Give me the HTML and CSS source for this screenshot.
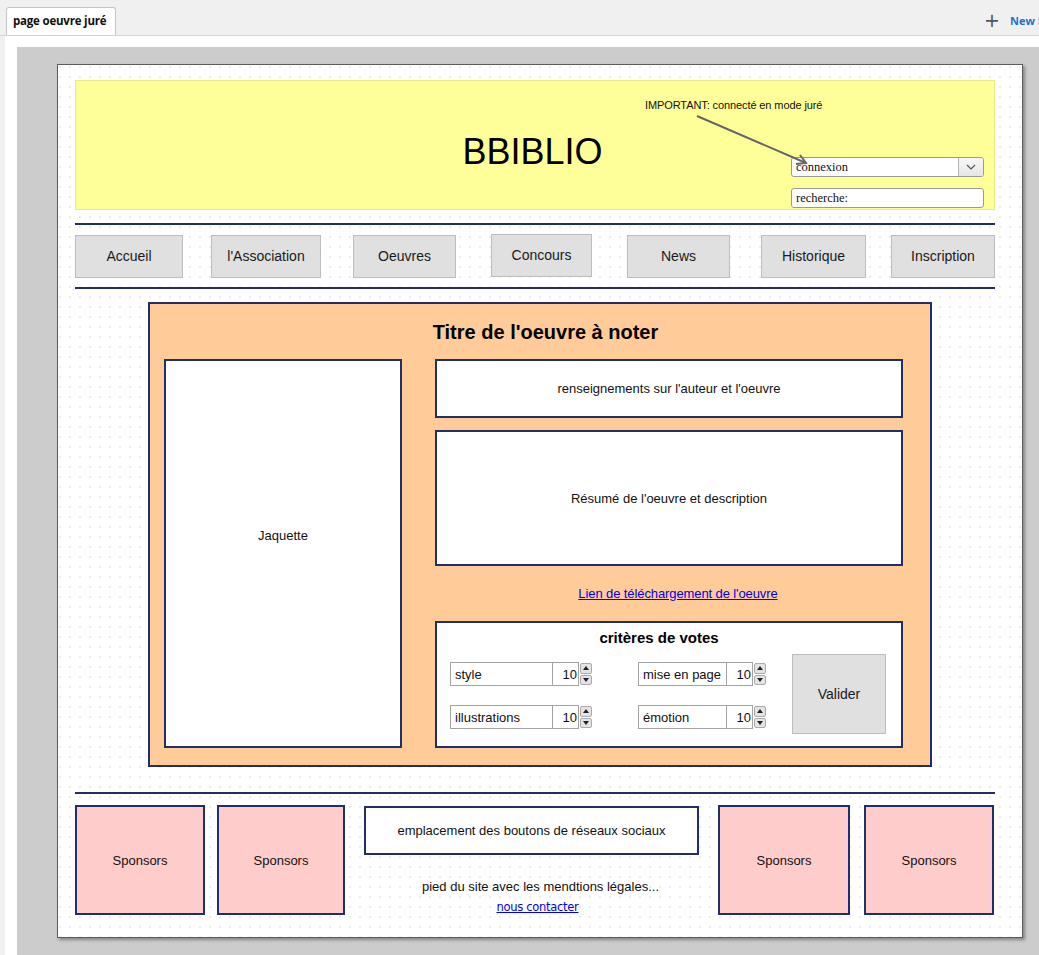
FILE: index.html
```html
<!DOCTYPE html>
<html lang="fr">
<head>
<meta charset="utf-8">
<title>page oeuvre juré</title>
<link rel="stylesheet" href="styles.css">
</head>
<body>
<div class="topbar">
  <div class="tab">page oeuvre juré</div>
  <div class="newpage"><span class="plus">+</span><span class="newtext">New Page</span></div>
</div>
<div class="workspace">
  <div class="canvas">
    <div class="page">
      <header class="header">
        <div class="brand">BBIBLIO</div>
        <div class="note">IMPORTANT: connecté en mode juré</div>
        <svg class="arrow" width="920" height="130" viewBox="0 0 920 130">
          <line x1="621" y1="35" x2="730" y2="82" stroke="#666" stroke-width="2"/>
          <polyline points="724,74 730,82 720,83" fill="none" stroke="#666" stroke-width="2"/>
        </svg>
        <div class="controls">
          <div class="select">
            <span class="select-text">connexion</span>
            <span class="select-btn"><svg width="10" height="6" viewBox="0 0 10 6"><path d="M1 1 L5 5 L9 1" fill="none" stroke="#555" stroke-width="1.2"/></svg></span>
          </div>
          <div class="search">recherche:</div>
        </div>
      </header>
      <div class="rule rule-top"></div>
      <nav class="nav">
        <div class="navbtn">Accueil</div>
        <div class="navbtn">l'Association</div>
        <div class="navbtn">Oeuvres</div>
        <div class="navbtn">Concours</div>
        <div class="navbtn">News</div>
        <div class="navbtn">Historique</div>
        <div class="navbtn">Inscription</div>
      </nav>
      <div class="rule rule-mid"></div>
      <section class="work">
        <h1 class="work-title">Titre de l'oeuvre à noter</h1>
        <div class="work-body">
          <div class="box jaquette">Jaquette</div>
          <div class="work-right">
            <div class="box info">renseignements sur l'auteur et l'oeuvre</div>
            <div class="box resume">Résumé de l'oeuvre et description</div>
            <div class="linkrow"><a href="#" class="dl-link">Lien de téléchargement de l'oeuvre</a></div>
            <div class="box criteria">
              <div class="crit-title">critères de votes</div>
              <div class="crit-body">
                <div class="crit-grid">
                  <div class="spin">
                    <div class="spin-label">style</div>
                    <div class="spin-num">10</div>
                    <div class="spin-arrows"><span class="up"></span><span class="down"></span></div>
                  </div>
                  <div class="spin spin-narrow">
                    <div class="spin-label">mise en page</div>
                    <div class="spin-num">10</div>
                    <div class="spin-arrows"><span class="up"></span><span class="down"></span></div>
                  </div>
                  <div class="spin">
                    <div class="spin-label">illustrations</div>
                    <div class="spin-num">10</div>
                    <div class="spin-arrows"><span class="up"></span><span class="down"></span></div>
                  </div>
                  <div class="spin spin-narrow">
                    <div class="spin-label">émotion</div>
                    <div class="spin-num">10</div>
                    <div class="spin-arrows"><span class="up"></span><span class="down"></span></div>
                  </div>
                </div>
                <div class="valider">Valider</div>
              </div>
            </div>
          </div>
        </div>
      </section>
      <div class="rule rule-bottom"></div>
      <footer class="footer">
        <div class="sponsor s1">Sponsors</div>
        <div class="sponsor s2">Sponsors</div>
        <div class="footer-mid">
          <div class="box social">emplacement des boutons de réseaux sociaux</div>
          <div class="legal">pied du site avec les mendtions légales...</div>
          <a href="#" class="contact">nous contacter</a>
        </div>
        <div class="sponsor s3">Sponsors</div>
        <div class="sponsor s4">Sponsors</div>
      </footer>
    </div>
  </div>
</div>
</body>
</html>
```
FILE: styles.css
```css
* { box-sizing: border-box; }
html, body { margin: 0; padding: 0; }
body {
  background: #f0f0f0;
  font-family: "Liberation Sans", Arial, sans-serif;
  font-size: 13px;
  color: #111;
  width: 1039px;
  height: 955px;
  overflow: hidden;
}

/* top bar */
.topbar {
  height: 36px;
  border-bottom: 1px solid #d6d6d6;
  display: flex;
  align-items: flex-end;
  padding-left: 6px;
  overflow: hidden;
}
.tab {
  height: 29px;
  width: 110px;
  background: #fff;
  border: 1px solid #c6c6c6;
  border-bottom: none;
  border-radius: 3px 3px 0 0;
  font-family: "Open Sans", sans-serif;
  font-weight: 700;
  font-size: 11.5px;
  padding: 5px 0 0 6px;
  margin-bottom: -1px;
  color: #111;
  letter-spacing: -0.2px;
}
.newpage {
  margin-left: auto;
  margin-right: -25px;
  align-self: center;
  display: flex;
  align-items: center;
  gap: 10px;
  margin-top: 6px;
  white-space: nowrap;
}
.plus {
  font-family: "DejaVu Sans", sans-serif;
  font-size: 19px;
  color: #555;
  line-height: 1;
}
.newtext {
  font-family: "Open Sans", sans-serif;
  font-weight: 700;
  font-size: 11px;
  color: #1874cd;
}

/* workspace */
.workspace {
  margin-left: 5px;
  background: #fff;
  padding: 11px 0 0 12px;
  height: 919px;
}
.canvas {
  background: #cccccc;
  height: 908px;
  padding: 17px 0 0 40px;
}
.page {
  width: 966px;
  height: 874px;
  background-color: #fff;
  background-image: radial-gradient(circle at 2px 2px, #ebecf1 1px, transparent 1.6px);
  background-size: 10px 10px;
  border: 1px solid #5c5c5c;
  box-shadow: 2px 2px 3px rgba(0,0,0,0.35);
  padding: 15px 27px 0 17px;
}

/* header */
.header {
  position: relative;
  height: 130px;
  background: #ffff99;
  border: 1px solid #e9e98a;
  display: grid;
}
.header > * { grid-area: 1 / 1; }
.brand {
  justify-self: center;
  align-self: center;
  margin-top: 14px;
  margin-right: 5px;
  font-size: 36px;
  color: #000;
}
.note {
  justify-self: start;
  align-self: start;
  margin: 18px 0 0 569px;
  font-size: 11px;
  color: #111;
  letter-spacing: -0.1px;
}
.arrow {
  position: absolute;
  left: 0;
  top: 0;
  pointer-events: none;
}
.controls {
  justify-self: end;
  align-self: end;
  margin: 0 10px 1px 0;
  display: flex;
  flex-direction: column;
  gap: 11px;
}
.select, .search {
  width: 193px;
  height: 20px;
  background: #fff;
  border: 1px solid #9a9a9a;
  border-radius: 3px;
  font-family: "Liberation Serif", "Times New Roman", serif;
  font-size: 12.5px;
  color: #111;
}
.select { display: flex; align-items: stretch; }
.select-text { flex: 1; padding: 2px 0 0 4px; }
.select-btn {
  width: 25px;
  border-left: 1px solid #b5b5b5;
  background: linear-gradient(#f7f7f7, #e6e6e6);
  border-radius: 0 2px 2px 0;
  display: flex;
  align-items: center;
  justify-content: center;
}
.search { padding: 2px 0 0 4px; }

/* rules */
.rule { height: 2px; background: #222e6a; width: 920px; }
.rule-top { margin-top: 13px; }
.rule-mid { margin-top: 9px; }
.rule-bottom { margin-top: 25px; }

/* nav */
.nav {
  display: flex;
  align-items: flex-start;
  margin-top: 10px;
  height: 43px;
}
.navbtn {
  height: 43px;
  background: #e0e0e0;
  border: 1px solid #bdbdbd;
  display: flex;
  align-items: center;
  justify-content: center;
  font-size: 14px;
  color: #1a1a1a;
  padding-bottom: 1px;
}
.navbtn:nth-child(1) { width: 108px; }
.navbtn:nth-child(2) { width: 110px; margin-left: 28px; }
.navbtn:nth-child(3) { width: 103px; margin-left: 32px; }
.navbtn:nth-child(4) { width: 101px; margin-left: 35px; margin-top: -1px; }
.navbtn:nth-child(5) { width: 103px; margin-left: 35px; }
.navbtn:nth-child(6) { width: 105px; margin-left: 31px; }
.navbtn:nth-child(7) { width: 104px; margin-left: 25px; }

/* work */
.work {
  margin: 13px 0 0 73px;
  width: 784px;
  height: 465px;
  background: #ffcc99;
  border: 2px solid #222e6a;
  padding: 0 27px 0 14px;
}
.work-title {
  margin: 0;
  height: 55px;
  line-height: 56px;
  text-align: center;
  padding-left: 24px;
  font-size: 20px;
  font-weight: 700;
  color: #000;
}
.work-body { display: flex; gap: 33px; }
.box {
  background: #fff;
  border: 2px solid #222e6a;
  display: flex;
  align-items: center;
  justify-content: center;
  color: #111;
}
.jaquette { width: 238px; height: 389px; padding-bottom: 36px; }
.work-right { width: 468px; display: flex; flex-direction: column; }
.info { height: 59px; }
.resume { height: 136px; margin-top: 12px; }
.linkrow {
  height: 55px;
  display: flex;
  align-items: center;
  justify-content: center;
  padding: 0 0 0 18px;
}
.dl-link { color: #0000ee; font-size: 13px; letter-spacing: -0.1px; }

.criteria {
  height: 127px;
  display: block;
  padding: 0 15px 0 13px;
}
.crit-title {
  height: 29px;
  line-height: 30px;
  text-align: center;
  font-weight: 700;
  font-size: 15px;
  color: #000;
  padding-right: 18px;
}
.crit-body {
  display: flex;
  align-items: flex-start;
  margin-top: 2px;
}
.crit-grid {
  display: grid;
  grid-template-columns: 142px 129px;
  column-gap: 46px;
  row-gap: 19px;
  margin-top: 8px;
}
.spin { display: flex; height: 24px; align-items: center; }
.spin-label {
  width: 103px;
  height: 24px;
  background: #fff;
  border: 1px solid #a3a3a3;
  padding: 4px 0 0 4px;
  font-size: 13px;
  color: #111;
}
.spin-narrow .spin-label { width: 89px; }
.spin-num {
  width: 26px;
  height: 24px;
  background: #fff;
  border: 1px solid #a3a3a3;
  border-left: none;
  text-align: right;
  padding: 4px 1px 0 0;
  font-size: 13px;
}
.spin-arrows {
  width: 12px;
  height: 22px;
  margin-left: 1px;
  display: flex;
  flex-direction: column;
  gap: 1px;
}
.spin-arrows span {
  flex: 1;
  background: #e4e4e4;
  border: 1px solid #ababab;
  border-radius: 2px;
  position: relative;
}
.spin-arrows span::after {
  content: "";
  position: absolute;
  left: 2px;
  top: 2px;
  border-left: 3px solid transparent;
  border-right: 3px solid transparent;
}
.spin-arrows .up::after { border-bottom: 4px solid #222; }
.spin-arrows .down::after { border-top: 4px solid #222; }
.valider {
  margin-left: 25px;
  width: 94px;
  height: 80px;
  background: #e0e0e0;
  border: 1px solid #bdbdbd;
  display: flex;
  align-items: center;
  justify-content: center;
  font-size: 14px;
  color: #1a1a1a;
}

/* footer */
.footer {
  display: flex;
  margin-top: 11px;
  height: 110px;
}
.sponsor {
  height: 110px;
  background: #ffcccc;
  border: 2px solid #222e6a;
  display: flex;
  align-items: center;
  justify-content: center;
  color: #111;
}
.s1 { width: 130px; margin-right: 12px; }
.s2 { width: 128px; margin-right: 19px; }
.s3 { width: 132px; margin-left: 19px; margin-right: 14px; }
.s4 { width: 130px; }
.footer-mid {
  width: 335px;
  display: flex;
  flex-direction: column;
  align-items: center;
}
.social { width: 335px; height: 49px; margin-top: 1px; }
.legal { margin-top: 24px; line-height: 16px; padding-left: 18px; }
.contact {
  margin-top: 5px;
  margin-left: 12px;
  font-family: "DejaVu Sans", sans-serif;
  font-size: 11.5px;
  color: #0000ee;
  line-height: 14px;
  letter-spacing: -0.3px;
}
```
